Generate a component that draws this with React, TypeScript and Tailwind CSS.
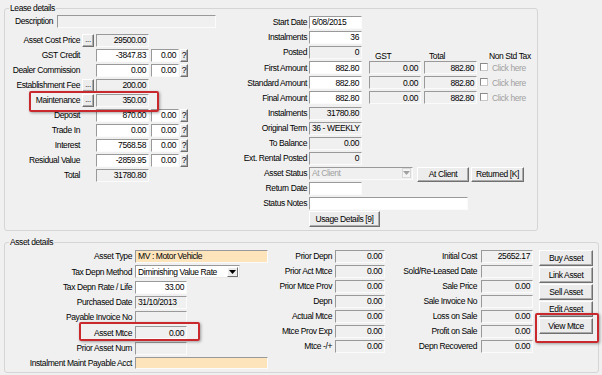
import React from "react";

type FieldProps = {
  w: string;
  h?: string;
  v?: string;
  left?: boolean;
  bg?: string;
  ml?: string;
  color?: string;
};

function Field({ w, h = "h-[13px]", v = "", left = false, bg = "bg-[#f0f0f0]", ml = "", color = "text-black" }: FieldProps) {
  return (
    <div
      className={`${w} ${h} ${ml} ${bg} ${color} shrink-0 flex items-center ${
        left ? "justify-start pl-[2px]" : "justify-end pr-[2px]"
      } border border-t-[#999999] border-l-[#999999] border-r-[#fbfbfb] border-b-[#fbfbfb] whitespace-nowrap overflow-hidden leading-none`}
    >
      {v}
    </div>
  );
}

type BtnProps = { w: string; h: string; ml?: string; className?: string; children?: React.ReactNode };

function Btn({ w, h, ml = "", className = "", children }: BtnProps) {
  return (
    <div
      className={`${w} ${h} ${ml} shrink-0 flex items-center justify-center bg-[#ececec] border border-t-[#ffffff] border-l-[#ffffff] border-r-[#707070] border-b-[#707070] shadow-[inset_-1px_-1px_0_#ababab] whitespace-nowrap leading-none ${className}`}
    >
      {children}
    </div>
  );
}

function Group({ title, className, children }: { title: string; className: string; children: React.ReactNode }) {
  return (
    <div className={`relative border border-[#d5d5d5] rounded-[3px] ${className}`}>
      <span className="absolute left-[4px] top-[-6px] bg-[#f0f0f0] px-[1px] leading-[11px]">{title}</span>
      {children}
    </div>
  );
}

function Arrow({ dark }: { dark: boolean }) {
  return (
    <svg width="7" height="4" viewBox="0 0 7 4">
      <polygon points="0,0 7,0 3.5,4" fill={dark ? "#000000" : "#a0a0a0"} />
    </svg>
  );
}

function Dots() {
  return (
    <Btn w="w-[12px]" h="h-[13px]" ml="ml-[2px]" className="items-end pb-[2px] text-[8px]">
      ...
    </Btn>
  );
}

function Q() {
  return (
    <Btn w="w-[8px]" h="h-[13px]" ml="ml-[1px]">
      ?
    </Btn>
  );
}

function Check() {
  return (
    <div className="ml-[3px] mt-[2px] w-[8px] h-[8px] shrink-0 bg-[#ffffff] border border-t-[#8a8a8a] border-l-[#8a8a8a] border-r-[#c8c8c8] border-b-[#c8c8c8]" />
  );
}

const leftLease = [
  { l: "Asset Cost Price", btn: true, v: "29500.00", white: false, q: false },
  { l: "GST Credit", btn: false, v: "-3847.83", white: true, q: true },
  { l: "Dealer Commission", btn: false, v: "0.00", white: true, q: true },
  { l: "Establishment Fee", btn: true, v: "200.00", white: false, q: false },
  { l: "Maintenance", btn: true, v: "350.00", white: false, q: false },
  { l: "Deposit", btn: false, v: "870.00", white: true, q: true },
  { l: "Trade In", btn: false, v: "0.00", white: true, q: true },
  { l: "Interest", btn: false, v: "7568.58", white: true, q: true },
  { l: "Residual Value", btn: false, v: "-2859.95", white: true, q: true },
  { l: "Total", btn: false, v: "31780.80", white: false, q: false },
];

const assetMid = ["Prior Depn", "Prior Act Mtce", "Prior Mtce Prov", "Depn", "Actual Mtce", "Mtce Prov Exp", "Mtce -/+"];

const assetRight = [
  { l: "Initial Cost", v: "25652.17" },
  { l: "Sold/Re-Leased Date", v: "" },
  { l: "Sale Price", v: "0.00" },
  { l: "Sale Invoice No", v: "" },
  { l: "Loss on Sale", v: "0.00" },
  { l: "Profit on Sale", v: "0.00" },
  { l: "Depn Recovered", v: "0.00" },
];

function MidLabel({ t }: { t: string }) {
  return <div className="w-[91px] h-[13px] shrink-0 flex items-center justify-end whitespace-nowrap leading-none">{t}</div>;
}

function GstCells() {
  return (
    <>
      <Field w="w-[52px]" ml="ml-[7px]" v="0.00" />
      <Field w="w-[53px]" ml="ml-[3px]" v="882.80" />
      <Check />
      <span className="ml-[4px] h-[13px] flex items-center leading-none text-[#a0a0a0] whitespace-nowrap">Click here</span>
    </>
  );
}

export default function App() {
  return (
    <div className="relative w-[602px] h-[375px] overflow-hidden bg-[#f0f0f0] text-black text-[8.5px] tracking-[-0.4px] font-['Liberation_Sans',Arial,sans-serif] pt-[8px] pl-[4px]">
      <Group title="Lease details" className="w-[534px] h-[223px] flex">
        {/* left column */}
        <div className="w-[211px] shrink-0 pt-[6px] flex flex-col">
          <div className="flex h-[13px] items-center">
            <div className="w-[52px] pl-[10px] leading-none whitespace-nowrap">Description</div>
            <Field w="w-[159px]" />
          </div>
          <div className="mt-[6px] flex flex-col">
            {leftLease.map((r) => (
              <div key={r.l} className="flex items-start h-[15px]">
                <div className="w-[75px] h-[13px] shrink-0 flex items-center justify-end whitespace-nowrap leading-none">{r.l}</div>
                {r.btn ? <Dots /> : null}
                <Field
                  w="w-[53px]"
                  ml={r.btn ? "ml-[2px]" : "ml-[16px]"}
                  v={r.v}
                  bg={r.white ? "bg-[#ffffff]" : "bg-[#f0f0f0]"}
                />
                {r.q ? (
                  <>
                    <Field w="w-[28px]" ml="ml-[2px]" v="0.00" bg="bg-[#ffffff]" />
                    <Q />
                  </>
                ) : null}
              </div>
            ))}
          </div>
        </div>

        {/* middle column */}
        <div className="flex-1 pt-[7px] flex flex-col">
          <div className="flex items-start h-[15.1px]">
            <MidLabel t="Start Date" />
            <Field w="w-[53px]" ml="ml-[2px]" v="6/08/2015" left bg="bg-[#ffffff]" />
          </div>
          <div className="flex items-start h-[15.1px]">
            <MidLabel t="Instalments" />
            <Field w="w-[53px]" ml="ml-[2px]" v="36" bg="bg-[#ffffff]" />
          </div>
          <div className="flex items-start h-[15.1px]">
            <MidLabel t="Posted" />
            <Field w="w-[53px]" ml="ml-[2px]" v="0" />
            <div className="self-end leading-[10px] w-[52px] ml-[7px] pl-[6px]">GST</div>
            <div className="self-end leading-[10px] w-[53px] ml-[3px] pl-[5px]">Total</div>
            <div className="self-end leading-[10px] ml-[3px] pl-[9px] whitespace-nowrap">Non Std Tax</div>
          </div>
          {["First Amount", "Standard Amount", "Final Amount"].map((t) => (
            <div key={t} className="flex items-start h-[15.1px]">
              <MidLabel t={t} />
              <Field w="w-[53px]" ml="ml-[2px]" v="882.80" bg="bg-[#ffffff]" />
              <GstCells />
            </div>
          ))}
          <div className="flex items-start h-[15.1px]">
            <MidLabel t="Instalments" />
            <Field w="w-[53px]" ml="ml-[2px]" v="31780.80" />
          </div>
          <div className="flex items-start h-[15.1px]">
            <MidLabel t="Original Term" />
            <Field w="w-[53px]" ml="ml-[2px]" v="36 - WEEKLY" left />
          </div>
          <div className="flex items-start h-[15.1px]">
            <MidLabel t="To Balance" />
            <Field w="w-[53px]" ml="ml-[2px]" v="0.00" />
          </div>
          <div className="flex items-start h-[15.1px]">
            <MidLabel t="Ext. Rental Posted" />
            <Field w="w-[53px]" ml="ml-[2px]" v="0" />
          </div>
          <div className="flex items-start h-[15.1px]">
            <MidLabel t="Asset Status" />
            <div className="ml-[2px] w-[104px] h-[13px] shrink-0 flex items-center justify-between pl-[2px] pr-[1px] bg-[#f0f0f0] text-[#a0a0a0] border border-t-[#999999] border-l-[#999999] border-r-[#fbfbfb] border-b-[#fbfbfb] leading-none">
              <span>At Client</span>
              <div className="w-[9px] h-[10px] flex items-center justify-center bg-[#f4f4f4] border border-[#d9d9d9]">
                <Arrow dark={false} />
              </div>
            </div>
            <Btn w="w-[52px]" h="h-[15px]" ml="ml-[4px]">
              At Client
            </Btn>
            <Btn w="w-[53px]" h="h-[15px]" ml="ml-[2px]">
              Returned [K]
            </Btn>
          </div>
          <div className="flex items-start h-[15.1px]">
            <MidLabel t="Return Date" />
            <Field w="w-[53px]" ml="ml-[2px]" bg="bg-[#ffffff]" />
          </div>
          <div className="flex items-start h-[15.1px]">
            <MidLabel t="Status Notes" />
            <Field w="w-[159px]" ml="ml-[2px]" bg="bg-[#ffffff]" />
          </div>
          <div className="flex mt-[-1px]">
            <Btn w="w-[71px]" h="h-[16px]" ml="ml-[93px]">
              Usage Details [9]
            </Btn>
          </div>
        </div>
      </Group>

      <Group title="Asset details" className="mt-[11px] w-[595px] h-[131px] flex pt-[7px]">
        {/* left */}
        <div className="w-[265px] shrink-0 flex flex-col">
          {[
            { l: "Asset Type", el: <Field w="w-[133px]" ml="ml-[3px]" bg="bg-[#fde4bb]" v="MV : Motor Vehicle" left /> },
            {
              l: "Tax Depn Method",
              el: (
                <div className="ml-[3px] w-[105px] h-[13px] shrink-0 flex items-center justify-between pl-[2px] pr-[1px] bg-[#ffffff] border border-t-[#999999] border-l-[#999999] border-r-[#e8e8e8] border-b-[#e8e8e8] leading-none whitespace-nowrap">
                  <span>Diminishing Value Rate</span>
                  <div className="w-[11px] h-[10px] flex items-center justify-center bg-[#ececec] border border-t-[#ffffff] border-l-[#ffffff] border-r-[#707070] border-b-[#707070]">
                    <Arrow dark />
                  </div>
                </div>
              ),
            },
            { l: "Tax Depn Rate / Life", el: <Field w="w-[52px]" ml="ml-[3px]" bg="bg-[#ffffff]" v="33.00" /> },
            { l: "Purchased Date", el: <Field w="w-[52px]" ml="ml-[3px]" v="31/10/2013" left /> },
            { l: "Payable Invoice No", el: <Field w="w-[52px]" ml="ml-[3px]" /> },
            { l: "Asset Mtce", el: <Field w="w-[52px]" ml="ml-[3px]" v="0.00" /> },
            { l: "Prior Asset Num", el: <Field w="w-[52px]" ml="ml-[3px]" /> },
            { l: "Instalment Maint Payable Acct", el: <Field w="w-[133px]" ml="ml-[3px]" h="h-[12px]" bg="bg-[#fde4bb]" /> },
          ].map((r) => (
            <div key={r.l} className="flex items-start h-[15.3px]">
              <div className="w-[127px] h-[13px] shrink-0 flex items-center justify-end whitespace-nowrap leading-none">{r.l}</div>
              {r.el}
            </div>
          ))}
        </div>

        {/* middle */}
        <div className="w-[130px] shrink-0 flex flex-col">
          {assetMid.map((l) => (
            <div key={l} className="flex items-start h-[15px]">
              <div className="w-[62px] h-[13px] shrink-0 flex items-center justify-end whitespace-nowrap leading-none">{l}</div>
              <Field w="w-[50px]" ml="ml-[3px]" v="0.00" />
            </div>
          ))}
        </div>

        {/* right */}
        <div className="w-[133px] shrink-0 flex flex-col">
          {assetRight.map((r) => (
            <div key={r.l} className="flex items-start h-[15px]">
              <div className="w-[77px] h-[13px] shrink-0 flex items-center justify-end whitespace-nowrap leading-none">{r.l}</div>
              <Field w="w-[52px]" ml="ml-[4px]" v={r.v} />
            </div>
          ))}
        </div>

        {/* buttons */}
        <div className="ml-[6px] flex flex-col gap-[1px]">
          {["Buy Asset", "Link Asset", "Sell Asset", "Edit Asset", "View Mtce"].map((b) => (
            <Btn key={b} w="w-[54px]" h="h-[16px]">
              {b}
            </Btn>
          ))}
        </div>
      </Group>

      {/* red highlight overlays */}
      <div className="absolute left-[29px] top-[91px] w-[130px] h-[21px] border-2 border-[#c9282d] rounded-[2px] shadow-[1px_1px_3px_rgba(0,0,0,0.35)] pointer-events-none" />
      <div className="absolute left-[79px] top-[322px] w-[121px] h-[19px] border-2 border-[#c9282d] rounded-[2px] shadow-[1px_1px_3px_rgba(0,0,0,0.35)] pointer-events-none" />
      <div className="absolute left-[535px] top-[313px] w-[64px] h-[30px] border-2 border-[#c9282d] rounded-[2px] shadow-[1px_1px_3px_rgba(0,0,0,0.35)] pointer-events-none" />
    </div>
  );
}
